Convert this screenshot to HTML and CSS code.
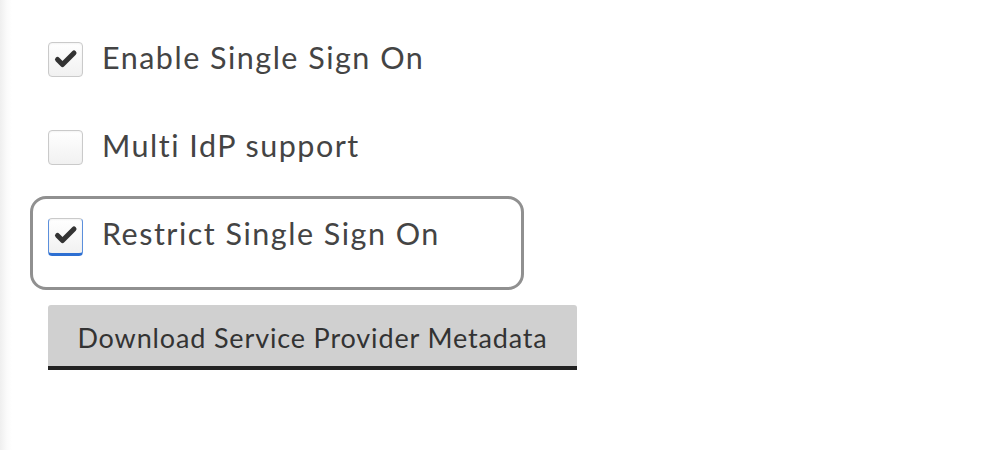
FILE: index.html
```html
<!DOCTYPE html>
<html lang="en">
<head>
    <meta charset="UTF-8">
    <meta name="viewport" content="width=device-width, initial-scale=1.0">
    <title>Single Sign On</title>
    <link rel="stylesheet" href="styles.css">
</head>
<body>
    <div class="settings">
        <!-- SSO options -->
        <label class="option">
            <span class="box">
                <svg viewBox="0 0 35 35" width="35" height="35"><path d="M9.5 17.5 L14.5 22.5 L26 11" fill="none" stroke="#333" stroke-width="5" stroke-linecap="round" stroke-linejoin="round"/></svg>
            </span>
            <span class="text">Enable Single Sign On</span>
        </label>

        <label class="option">
            <span class="box"></span>
            <span class="text">Multi IdP support</span>
        </label>

        <label class="option focused">
            <span class="box active">
                <svg viewBox="0 0 35 35" width="35" height="35"><path d="M9.5 17.5 L14.5 22.5 L26 11" fill="none" stroke="#333" stroke-width="5" stroke-linecap="round" stroke-linejoin="round"/></svg>
            </span>
            <span class="text">Restrict Single Sign On</span>
        </label>

        <button class="download">Download Service Provider Metadata</button>
    </div>
</body>
</html>
```

FILE: styles.css
```css
body {
    margin: 0;
    height: 450px;
    font-family: Lato, "Open Sans", sans-serif;
    color: #444;
    background: linear-gradient(to right, #efefef 0, #fbfbfb 7px, #fff 12px);
}
.settings {
    padding: 23px 0 0 33px;
}
.option {
    display: flex;
    align-items: flex-start;
    width: 488px;
    height: 88px;
    padding-left: 15px;
    box-sizing: border-box;
    border-radius: 13px;
}
.option.focused {
    outline: 3px solid #909090;
}
.box {
    display: block;
    width: 35px;
    height: 35px;
    margin-top: 19px;
    box-sizing: border-box;
    border: 1px solid #cacaca;
    border-radius: 4px;
    background: linear-gradient(#fff, #f1f1f1);
    box-shadow: inset 0 1px 2px rgba(0, 0, 0, 0.05);
    flex-shrink: 0;
}
.box svg {
    display: block;
    margin: -1px;
}
.box.active {
    height: 38px;
    border-color: #cacaca #5b8fdc #2d6fd2;
    border-bottom: 3px solid #2d6fd2;
}
.text {
    margin: 17px 0 0 19px;
    font-size: 30.5px;
    line-height: 35px;
    letter-spacing: 1.5px;
}
.download {
    display: block;
    margin: 18px 0 0 15px;
    width: 529px;
    height: 65px;
    padding: 3px 0 0;
    font-family: Lato, "Open Sans", sans-serif;
    font-size: 27px;
    letter-spacing: 0.85px;
    color: #333;
    background-color: #d0d0d0;
    border: none;
    border-bottom: 4px solid #222;
    border-radius: 3px 3px 0 0;
}
```
